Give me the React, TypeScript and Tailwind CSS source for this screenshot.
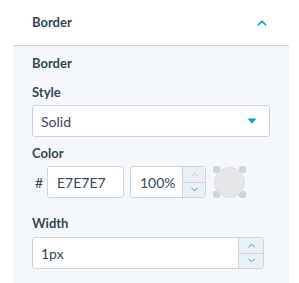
import { ChevronUp, ChevronDown } from 'lucide-react';

function Stepper({ upMuted }: { upMuted?: boolean }) {
  return (
    <div className="flex flex-col h-full bg-[#eaf0f6] border-l border-[#cbd6e2]">
      <button className="flex-1 flex items-center justify-center border-b border-[#cbd6e2]">
        <ChevronUp size={11} strokeWidth={2} className={upMuted ? 'text-[#b0c1d4]' : 'text-[#00a4bd]'} />
      </button>
      <button className="flex-1 flex items-center justify-center">
        <ChevronDown size={11} strokeWidth={2} className="text-[#00a4bd]" />
      </button>
    </div>
  );
}

export default function App() {
  return (
    <div className="w-[299px] h-[283px] bg-white pl-[13px] pr-[10px] text-[#33475b] font-['Lato',sans-serif] overflow-hidden">
      {/* Section header */}
      <div className="h-[46px] flex items-center justify-between pl-[19px] pr-[20px] border-b border-[#cbd6e2]">
        <span className="text-[13px] font-bold">Border</span>
        <ChevronUp size={14} strokeWidth={3} className="text-[#00a4bd]" />
      </div>

      <div className="bg-[#f5f8fa] h-full px-[19px] pt-[9px]">
        <div className="text-[13px] font-bold leading-4">Border</div>

        <div className="text-[13px] font-bold leading-4 mt-[13px]">Style</div>
        <div className="mt-[5px] h-[32px] bg-white border border-[#cbd6e2] rounded-[3px] flex items-center justify-between pl-[8px] pr-[12px]">
          <span className="text-[14px]">Solid</span>
          <svg width="10" height="6" viewBox="0 0 10 6">
            <path d="M0.5 0.5 H9.5 L5 5.5 Z" fill="#00a4bd" />
          </svg>
        </div>

        <div className="text-[13px] font-bold leading-4 mt-[8px]">Color</div>
        <div className="mt-[5px] h-[32px] flex items-center">
          <span className="w-[15px] text-[14px] pl-[3px]">#</span>
          <div className="w-[77px] h-full bg-white border border-[#cbd6e2] rounded-[3px] flex items-center pl-[9px] text-[14px]">
            E7E7E7
          </div>
          <div className="ml-[6px] w-[76px] h-full bg-white border border-[#cbd6e2] rounded-[3px] flex overflow-hidden">
            <div className="flex-1 flex items-center pl-[9px] text-[14px]">100%</div>
            <div className="w-[23px]">
              <Stepper upMuted />
            </div>
          </div>
          <div className="ml-[7px] relative w-[33px] h-[32px]">
            <span className="absolute left-0 top-0 w-[7px] h-[7px] rounded-[2px] bg-[#cbd6e2]" />
            <span className="absolute right-0 top-0 w-[7px] h-[7px] rounded-[2px] bg-[#cbd6e2]" />
            <span className="absolute left-0 bottom-0 w-[7px] h-[7px] rounded-[2px] bg-[#cbd6e2]" />
            <span className="absolute right-0 bottom-0 w-[7px] h-[7px] rounded-[2px] bg-[#cbd6e2]" />
            <span className="absolute inset-0 m-auto w-[31px] h-[31px] rounded-full bg-[#e7e7e7] border border-[#d6dfe8]" />
          </div>
        </div>

        <div className="text-[13px] font-bold leading-4 mt-[17px]">Width</div>
        <div className="mt-[6px] w-[232px] h-[32px] bg-white border border-[#cbd6e2] rounded-[3px] flex overflow-hidden">
          <div className="flex-1 flex items-center pl-[8px] text-[14px]">1px</div>
          <div className="w-[25px]">
            <Stepper />
          </div>
        </div>
      </div>
    </div>
  );
}
